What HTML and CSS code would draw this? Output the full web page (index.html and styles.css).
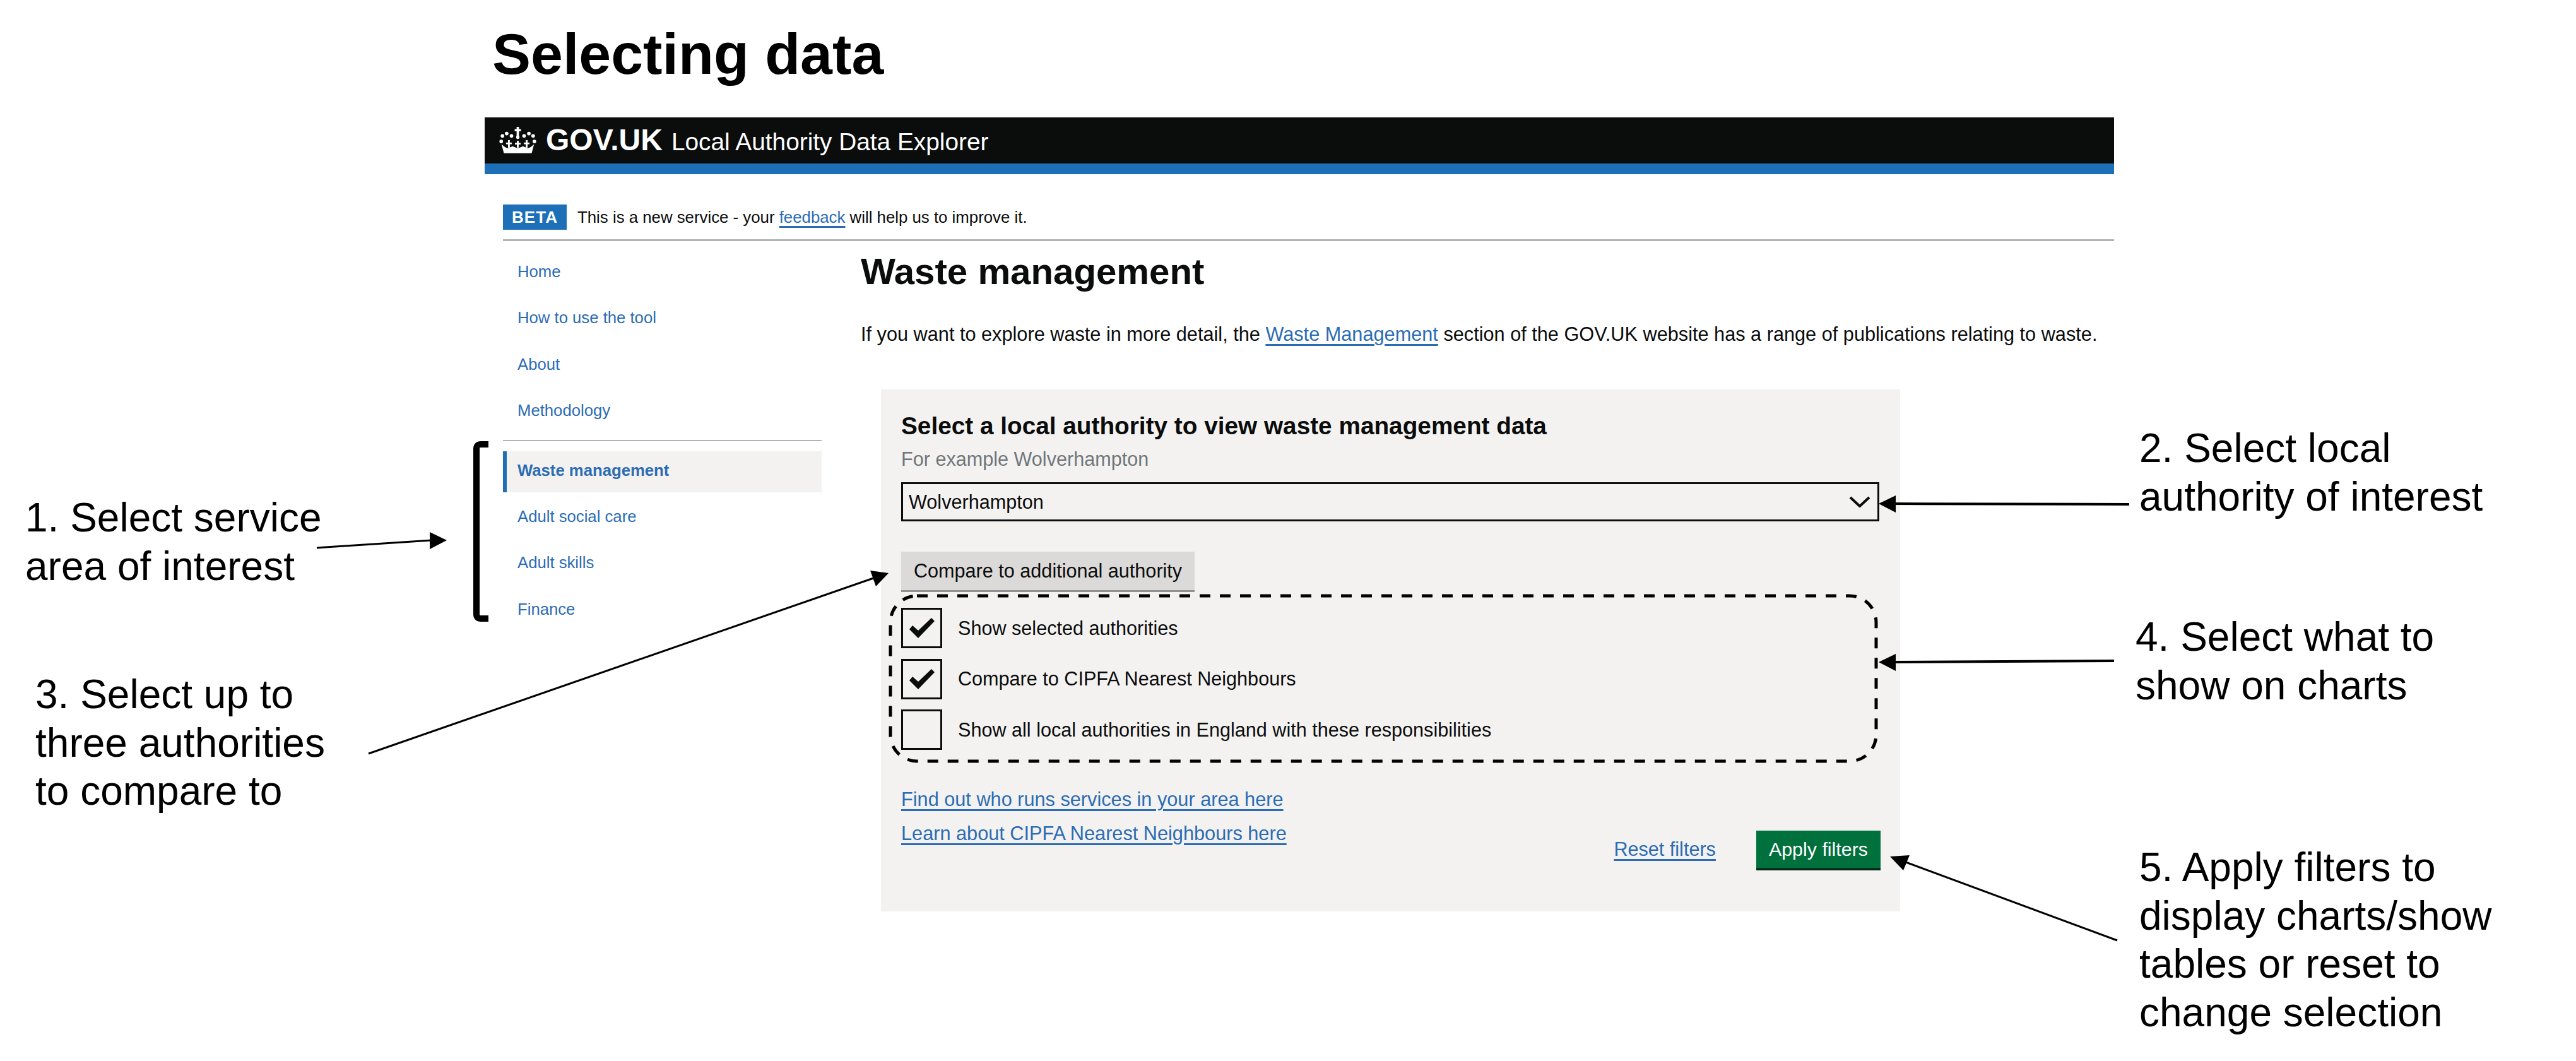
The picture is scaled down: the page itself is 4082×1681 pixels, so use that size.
FILE: index.html
```html
<!DOCTYPE html>
<html lang="en">
<head>
  <meta charset="UTF-8">
  <title>Selecting data</title>
  <link rel="stylesheet" href="styles.css">
</head>
<body>
<div class="page">
  <h1 class="page-title">Selecting data</h1>

  <div class="app">
    <header class="app-header">
      <svg class="crown" viewBox="0 0 53 40" aria-hidden="true">
        <rect x="24.8" y="0" width="3.4" height="16"/>
        <rect x="22" y="3.2" width="9" height="3.2"/>
        <circle cx="26.5" cy="15" r="2.4"/>
        <circle cx="17.4" cy="13" r="2.6"/>
        <circle cx="10.5" cy="9.6" r="2.6"/>
        <circle cx="4.4" cy="13" r="2.6"/>
        <circle cx="2.6" cy="21" r="2.6"/>
        <circle cx="35.6" cy="13" r="2.6"/>
        <circle cx="42.5" cy="9.6" r="2.6"/>
        <circle cx="48.6" cy="13" r="2.6"/>
        <circle cx="50.4" cy="21" r="2.6"/>
        <rect x="12.4" y="19" width="2.6" height="11"/>
        <rect x="9.6" y="22.6" width="8.2" height="2.4"/>
        <rect x="25.2" y="20" width="2.6" height="10"/>
        <rect x="22.4" y="23" width="8.2" height="2.4"/>
        <rect x="38" y="19" width="2.6" height="11"/>
        <rect x="35.2" y="22.6" width="8.2" height="2.4"/>
        <path d="M3 25 L8 29 L12 31 L19 28 L26.500 31 L34 28 L41 31 L45 29 L50 25 L46.500 38 H6.500 Z"/>
      </svg>
      <span class="logo-text">GOV.UK</span>
      <span class="service-name">Local Authority Data Explorer</span>
    </header>

    <div class="beta-bar">
      <strong class="beta-tag">BETA</strong>
      <span>This is a new service - your <a href="#">feedback</a> will help us to improve it.</span>
    </div>

    <div class="app-body">
      <nav class="side-nav">
        <ul class="nav-list">
          <li><a href="#">Home</a></li>
          <li><a href="#">How to use the tool</a></li>
          <li><a href="#">About</a></li>
          <li><a href="#">Methodology</a></li>
        </ul>
        <hr class="nav-rule">
        <ul class="nav-list">
          <li class="active"><a href="#">Waste management</a></li>
          <li><a href="#">Adult social care</a></li>
          <li><a href="#">Adult skills</a></li>
          <li><a href="#">Finance</a></li>
        </ul>
      </nav>

      <main class="content">
        <h2 class="content-title">Waste management</h2>
        <p class="intro">If you want to explore waste in more detail, the <a href="#">Waste Management</a> section of the GOV.UK website has a range of publications relating to waste.</p>

        <section class="filter-panel">
          <div class="filter-label">Select a local authority to view waste management data</div>
          <div class="filter-hint">For example Wolverhampton</div>
          <div class="select-box">
            <span>Wolverhampton</span>
            <svg class="chevron" viewBox="0 0 34 18" aria-hidden="true"><path d="M2 2 L17 16 L32 2"/></svg>
          </div>
          <button class="btn-compare" type="button">Compare to additional authority</button>

          <div class="check-list">
            <div class="check-row">
              <span class="check-box"><svg viewBox="0 0 40 32" aria-hidden="true"><path d="M0 18 L14 32 L40 5 L35 0 L14 20 L5 12 Z"/></svg></span>
              <span>Show selected authorities</span>
            </div>
            <div class="check-row">
              <span class="check-box"><svg viewBox="0 0 40 32" aria-hidden="true"><path d="M0 18 L14 32 L40 5 L35 0 L14 20 L5 12 Z"/></svg></span>
              <span>Compare to CIPFA Nearest Neighbours</span>
            </div>
            <div class="check-row">
              <span class="check-box"></span>
              <span>Show all local authorities in England with these responsibilities</span>
            </div>
          </div>

          <div class="panel-foot">
            <div class="help-links">
              <a href="#">Find out who runs services in your area here</a>
              <a href="#">Learn about CIPFA Nearest Neighbours here</a>
            </div>
            <div class="panel-actions">
              <a href="#">Reset filters</a>
              <button class="btn-apply" type="button">Apply filters</button>
            </div>
          </div>
        </section>
      </main>
    </div>
  </div>

  <!-- annotations drawn over the screenshot -->
  <svg class="marks" viewBox="0 0 4082 1681" aria-hidden="true">
    <path class="bracket" d="M774 704 H762 Q755 704 755 711 V973 Q755 980 762 980 H774"/>
    <line class="mark-thin" x1="502" y1="868" x2="684" y2="856"/>
    <polygon points="708,856 681,843 681,870"/>
    <line class="mark-line" x1="3374" y1="799" x2="3000" y2="798"/>
    <polygon points="2977,798 3004,785 3004,812"/>
    <line class="mark-thin" x1="584" y1="1194" x2="1384" y2="916"/>
    <polygon points="1408,908 1379,904 1388,929"/>
    <rect class="dash-box" x="1411" y="944" width="1562" height="262" rx="42"/>
    <line class="mark-line" x1="3350" y1="1047" x2="3000" y2="1049"/>
    <polygon points="2977,1049 3004,1036 3004,1063"/>
    <line class="mark-thin" x1="3355" y1="1490" x2="3020" y2="1366"/>
    <polygon points="2995,1357 3026,1355 3016,1379"/>
  </svg>

  <div class="callout c1">1. Select service<br>area of interest</div>
  <div class="callout c2">2. Select local<br>authority of interest</div>
  <div class="callout c3">3. Select up to<br>three authorities<br>to compare to</div>
  <div class="callout c4">4. Select what to<br>show on charts</div>
  <div class="callout c5">5. Apply filters to<br>display charts/show<br>tables or reset to<br>change selection</div>
</div>
</body>
</html>
```

FILE: styles.css
```css
body {
  margin: 0;
  background: #ffffff;
  color: #0b0c0c;
  font-family: "Liberation Sans", Arial, sans-serif;
}
a {
  color: #2b6cb4;
}
.page {
  position: relative;
  width: 4082px;
  height: 1681px;
  overflow: hidden;
}
.page-title {
  margin: 33px 0 49px 780px;
  font-size: 91.5px;
  line-height: 104px;
  font-weight: 700;
  color: #000000;
}
.app {
  width: 2582px;
  margin-left: 768px;
}

/* header */
.app-header {
  display: flex;
  align-items: baseline;
  height: 73px;
  padding-left: 23px;
  background: #0b0c0c;
  border-bottom: 17px solid #1d70b8;
  color: #ffffff;
  line-height: 71px;
}
.crown {
  width: 59px;
  height: 44px;
  margin-right: 15px;
  align-self: center;
  fill: #ffffff;
}
.logo-text {
  font-size: 48px;
  font-weight: 700;
  margin-right: 14px;
}
.service-name {
  font-size: 38.8px;
}

/* beta banner */
.beta-bar {
  display: flex;
  align-items: center;
  gap: 17px;
  margin-left: 29px;
  padding: 48px 0 15px;
  border-bottom: 3px solid #b1b4b6;
  font-size: 25.8px;
}
.beta-tag {
  display: block;
  width: 101px;
  height: 40px;
  background: #1d70b8;
  color: #ffffff;
  font-size: 26px;
  line-height: 40px;
  letter-spacing: 1px;
  text-align: center;
}
.beta-bar a,
.intro a,
.help-links a,
.panel-actions a {
  text-decoration-thickness: 3px;
  text-underline-offset: 5px;
}

/* sidebar */
.app-body {
  display: flex;
  gap: 62px;
  margin-left: 29px;
}
.side-nav {
  flex: 0 0 505px;
  padding-top: 18px;
}
.nav-list {
  display: flex;
  flex-direction: column;
  gap: 8.3px;
  margin: 0;
  padding: 0;
  list-style: none;
}
.nav-list li {
  height: 65px;
  border-left: 6px solid transparent;
  padding-left: 17px;
  font-size: 25.7px;
  line-height: 61px;
}
.nav-list a {
  text-decoration: none;
}
.nav-list .active {
  border-left-color: #1d70b8;
  background: #f3f2f1;
  font-weight: 700;
}
.nav-rule {
  height: 2px;
  margin: 12px 0 16px;
  border: 0;
  background: #b1b4b6;
}

/* main column */
.content {
  flex: 1;
}
.content-title {
  margin: 16px 0 45px;
  font-size: 58.2px;
  line-height: 64px;
  font-weight: 700;
}
.intro {
  margin: 0 0 64px;
  font-size: 30.7px;
  line-height: 46px;
  white-space: nowrap;
}

/* filter panel */
.filter-panel {
  width: 1615px;
  box-sizing: border-box;
  margin-left: 32px;
  padding: 35px 31px 65px 32px;
  background: #f3f2f1;
  font-size: 30.6px;
}
.filter-label {
  font-size: 38.75px;
  line-height: 46px;
  font-weight: 700;
}
.filter-hint {
  margin-top: 9px;
  color: #6f777b;
  line-height: 40px;
}
.select-box {
  display: flex;
  align-items: center;
  justify-content: space-between;
  box-sizing: border-box;
  width: 1550px;
  height: 62px;
  margin-top: 17px;
  padding: 0 11px 0 9px;
  border: 3px solid #0b0c0c;
}
.chevron {
  width: 34px;
  height: 18px;
  fill: none;
  stroke: #0b0c0c;
  stroke-width: 4;
}
.btn-compare {
  display: block;
  height: 64px;
  margin-top: 48px;
  padding: 0 20px;
  border: 0;
  border-bottom: 3px solid #929191;
  background: #dbdad9;
  color: #0b0c0c;
  font-family: inherit;
  font-size: 30.6px;
}
.check-list {
  display: flex;
  flex-direction: column;
  gap: 16.5px;
  margin-top: 25px;
}
.check-row {
  display: flex;
  align-items: center;
  gap: 25px;
  height: 64px;
}
.check-box {
  display: flex;
  align-items: center;
  justify-content: center;
  box-sizing: border-box;
  width: 65px;
  height: 64px;
  border: 3px solid #0b0c0c;
}
.check-box svg {
  width: 40px;
  height: 32px;
  fill: #0b0c0c;
}
.panel-foot {
  display: flex;
  justify-content: space-between;
  height: 139px;
  margin-top: 52px;
}
.help-links {
  display: flex;
  flex-direction: column;
  line-height: 53.5px;
  font-size: 30.7px;
}
.panel-actions {
  display: flex;
  align-items: baseline;
  align-self: flex-end;
  gap: 64px;
}
.btn-apply {
  height: 63px;
  padding: 0 20px;
  border: 0;
  border-bottom: 4px solid #002d18;
  background: #00703c;
  color: #ffffff;
  font-family: inherit;
  font-size: 30.4px;
}

/* annotations */
.marks {
  position: absolute;
  top: 0;
  left: 0;
  width: 4082px;
  height: 1681px;
  fill: #000000;
}
.bracket {
  fill: none;
  stroke: #000000;
  stroke-width: 10;
}
.mark-line {
  stroke: #000000;
  stroke-width: 4;
}
.mark-thin {
  stroke: #000000;
  stroke-width: 3;
}
.dash-box {
  fill: none;
  stroke: #000000;
  stroke-width: 5;
  stroke-dasharray: 17 15;
}
.callout {
  position: absolute;
  font-size: 64px;
  line-height: 76.5px;
  color: #000000;
  white-space: nowrap;
}
.c1 { left: 40px; top: 782px; }
.c2 { left: 3390px; top: 672px; }
.c3 { left: 56px; top: 1062px; }
.c4 { left: 3384px; top: 971px; }
.c5 { left: 3390px; top: 1336px; }
```
